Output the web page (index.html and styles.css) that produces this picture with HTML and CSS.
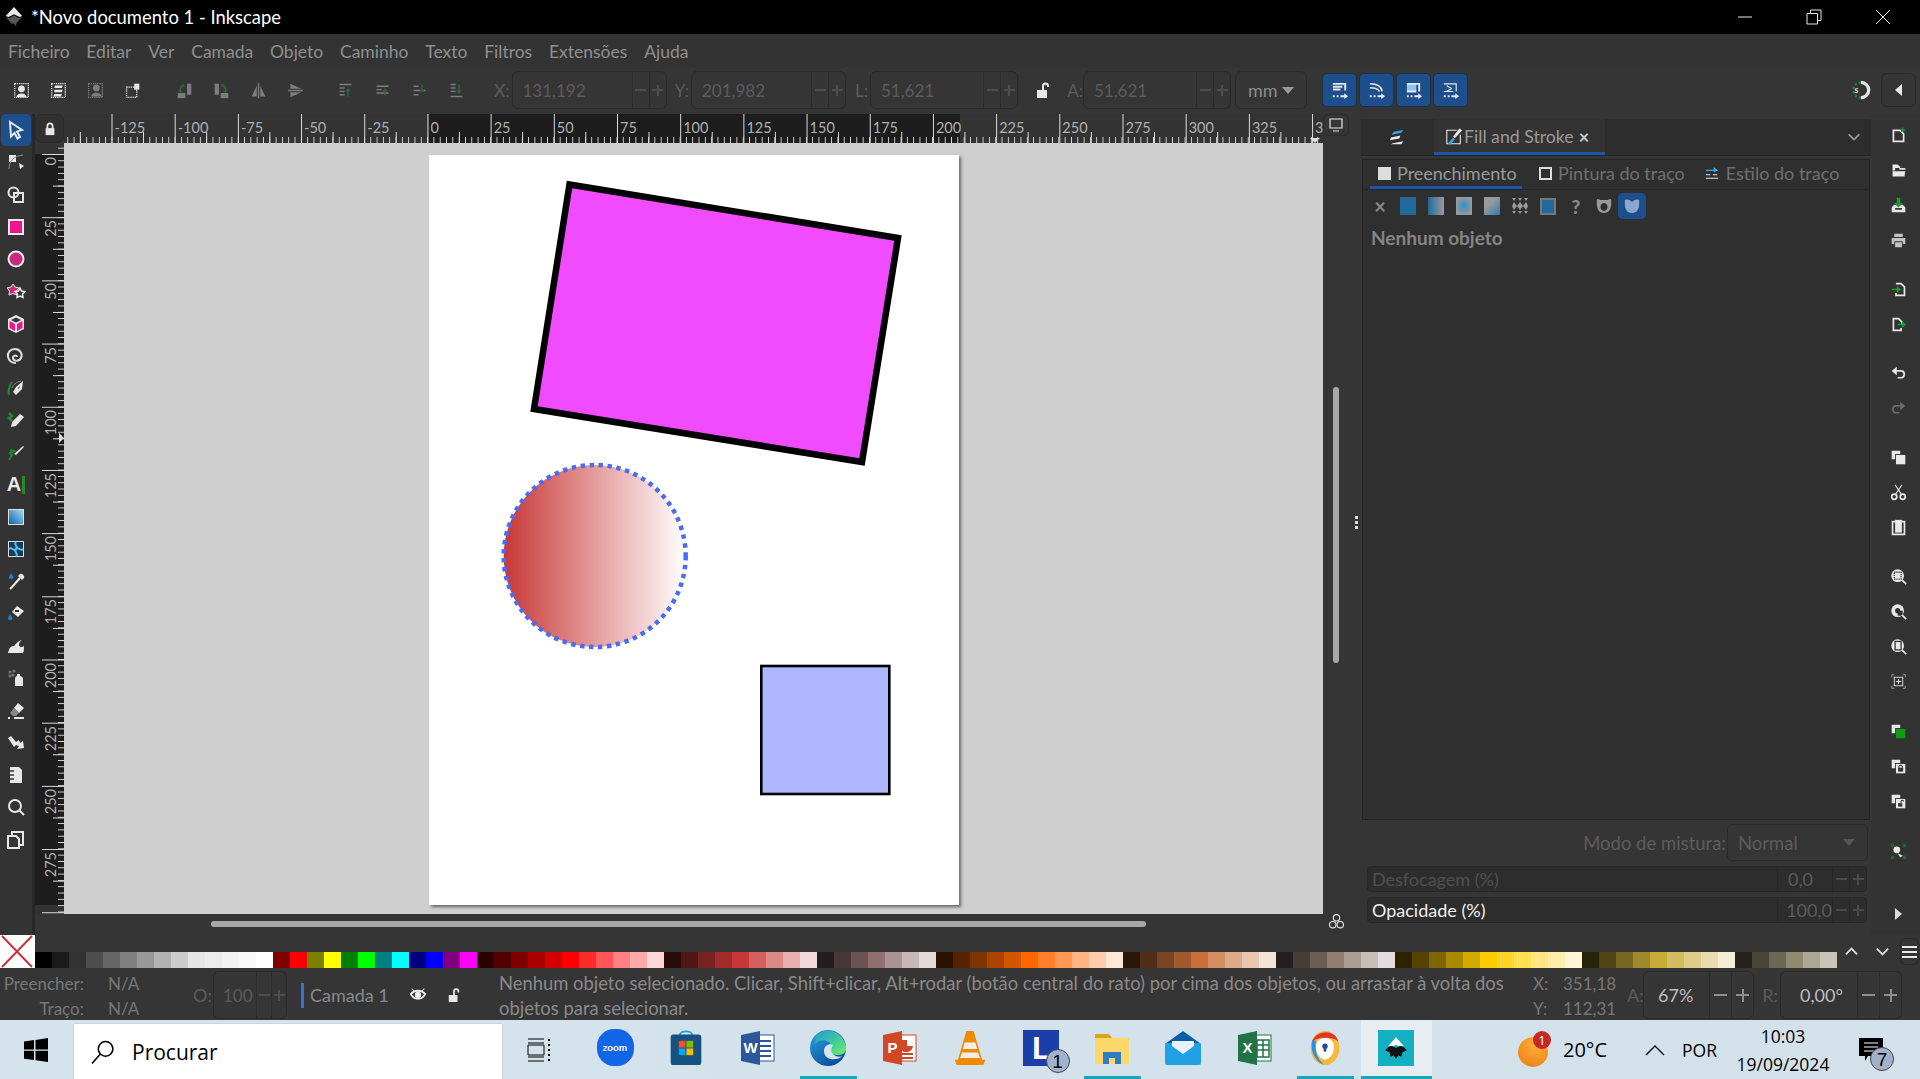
FILE: index.html

```html
<!DOCTYPE html>
<html lang="pt">
<head>
  <meta charset="UTF-8">
  <title>*Novo documento 1 - Inkscape</title>
  <link rel="stylesheet" href="styles.css">
</head>
<body>
  <!-- title bar -->
  <div class="titlebar">
    <svg class="app-logo" viewBox="0 0 24 24"><path class="w" d="M12 1l9 10-3 1-6-3-6 3-3-1z"/><path fill="#555" d="M3 12l4 1 5-3 5 3 4-1-6 6-1 4-2-3-3 0z"/></svg>
    <span class="title-text">*Novo documento 1 - Inkscape</span>
    <div class="win-btns">
      <svg viewBox="0 0 16 16"><path d="M1 8h14" class="ln"/></svg>
      <svg viewBox="0 0 16 16"><path d="M1 4.500h10.500v10.500h-10.500zM4.500 4.500v-3.500h10.500v10.500h-3.500" class="ln"/></svg>
      <svg viewBox="0 0 16 16"><path d="M1 1l14 14M15 1l-14 14" class="ln"/></svg>
    </div>
  </div>

  <!-- menu -->
  <div class="menubar">
    <span>Ficheiro</span><span>Editar</span><span>Ver</span><span>Camada</span><span>Objeto</span><span>Caminho</span><span>Texto</span><span>Filtros</span><span>Extensões</span><span>Ajuda</span>
  </div>

  <!-- commands bar -->
  <div class="toolbar">
    <div class="tb-group first">
      <div class="tb-ic"><svg viewBox="0 0 20 20"><rect class="dots" x="2" y="2" width="16" height="16"/><circle class="w" cx="10" cy="8" r="4"/><path class="w" d="M4 18c0-6 12-6 12 0z"/></svg></div>
      <div class="tb-ic"><svg viewBox="0 0 20 20"><rect class="dots" x="2" y="2" width="16" height="16"/><path class="w" d="M6 4h9l-1 3h-9zM5 9h10l-1 3h-9zM5 14h9l-1 3h-9z"/></svg></div>
      <div class="tb-ic dim"><svg viewBox="0 0 20 20"><rect class="dots" x="2" y="2" width="16" height="16"/><circle class="w" cx="11" cy="7" r="4"/><path class="w" d="M5 17c0-6 12-6 12 0z"/></svg></div>
      <div class="tb-ic"><svg viewBox="0 0 20 20"><rect class="dots" x="3" y="6" width="12" height="12"/><rect class="w" x="12" y="2" width="6" height="7"/></svg></div>
    </div>
    <div class="tb-group mid dim">
      <div class="tb-ic"><svg viewBox="0 0 20 20"><rect class="w" x="2" y="13" width="9" height="6"/><rect class="w" x="13" y="2" width="5" height="13"/><path class="grn" d="M10 2c-4 1-6 3-6 8H2l3 3 3-3H6c0-3 1-4 4-5z"/></svg></div>
      <div class="tb-ic"><svg viewBox="0 0 20 20"><rect class="w" x="9" y="13" width="9" height="6"/><rect class="w" x="2" y="2" width="5" height="13"/><path class="grn" d="M10 2c4 1 6 3 6 8h2l-3 3-3-3h2c0-3-1-4-4-5z"/></svg></div>
      <div class="tb-ic"><svg viewBox="0 0 20 20"><path class="w" d="M8 4v13H2zM12 4v13h6z"/><path class="ln2" d="M10 1v18"/></svg></div>
      <div class="tb-ic"><svg viewBox="0 0 20 20"><path class="w" d="M4 2l13 6H4zM4 12h13L4 18z"/><path class="ln2" d="M1 10h18"/></svg></div>
    </div>
    <div class="tb-group mid2 dim">
      <div class="tb-ic"><svg viewBox="0 0 20 20"><path class="ln2" d="M3 3h14M3 7h6M3 11h6M3 15h6"/><path class="grn" d="M13 7l3 4h-2v6h-2v-6h-2z"/></svg></div>
      <div class="tb-ic"><svg viewBox="0 0 20 20"><path class="ln2" d="M3 5h14M3 9h6M3 13h14"/><path class="grn" d="M13 7l3 4h-2v5h-2v-5h-2z"/></svg></div>
      <div class="tb-ic"><svg viewBox="0 0 20 20"><path class="ln2" d="M3 5h6M3 10h14M3 15h6"/><path class="grn" d="M13 13l3-4h-2v-6h-2v6h-2z"/></svg></div>
      <div class="tb-ic"><svg viewBox="0 0 20 20"><path class="ln2" d="M3 3h6M3 7h6M3 11h6M3 17h14"/><path class="grn" d="M13 14l3-4h-2v-7h-2v7h-2z"/></svg></div>
    </div>
    <span class="lbl lbl-x">X:</span>
    <div class="field f-wide"><span class="val">131,192</span><i class="mn"></i><i class="pl"></i></div>
    <span class="lbl lbl-y">Y:</span>
    <div class="field f-wide"><span class="val">201,982</span><i class="mn"></i><i class="pl"></i></div>
    <span class="lbl lbl-l">L:</span>
    <div class="field f-narrow"><span class="val">51,621</span><i class="mn"></i><i class="pl"></i></div>
    <div class="lock-box"><svg viewBox="0 0 16 16"><path class="w" d="M2 8h10v8H2z"/><path class="ln3" d="M8 8V4c0-3.500 5-3.500 5 0v1"/></svg></div>
    <span class="lbl lbl-a">A:</span>
    <div class="field f-narrow"><span class="val">51,621</span><i class="mn"></i><i class="pl"></i></div>
    <div class="unit-sel"><span>mm</span><b class="caret"></b></div>
    <div class="snap-btns">
      <div class="snap-btn"><svg viewBox="0 0 20 20"><path class="ln3" d="M3 3h13v7M3 6h10M3 9h8"/><path class="w" d="M3 15h2v2H3zM7 15h2v2H7zM11 15h4v-2l4 3-4 3v-2h-4z"/></svg></div>
      <div class="snap-btn"><svg viewBox="0 0 20 20"><path class="ln2" d="M3 3c8 0 12 2 13 8M3 7c6 0 9 1 10 4"/><path class="w" d="M3 15h2v2H3zM7 15h2v2H7zM11 15h4v-2l4 3-4 3v-2h-4z"/></svg></div>
      <div class="snap-btn"><svg viewBox="0 0 20 20"><rect x="3" y="3" width="10" height="8" fill="#8cc8ee"/><path class="ln3" d="M3 3h13v8M3 11h10"/><path class="w" d="M3 15h2v2H3zM7 15h2v2H7zM11 15h4v-2l4 3-4 3v-2h-4z"/></svg></div>
      <div class="snap-btn"><svg viewBox="0 0 20 20"><path class="ln1" d="M3 3h13v8M3 11h10M6 5l5 3-5 3"/><path class="w" d="M3 15h2v2H3zM7 15h2v2H7zM11 15h4v-2l4 3-4 3v-2h-4z"/></svg></div>
    </div>
    <div class="tb-right">
      <svg class="snap-ic" viewBox="0 0 20 20"><path fill="none" stroke="#e6e6e6" stroke-width="3" d="M10 3a7 7 0 0 1 0 14"/><path fill="none" stroke="#1f8a2e" stroke-width="2" stroke-dasharray="2 2" d="M10 3a7 7 0 0 0 0 14"/><text x="4" y="13" class="snap-s">s</text></svg>
      <div class="side-btn"><b class="arr-l"></b></div>
    </div>
  </div>

  <!-- workspace -->
  <div class="workspace">
    <div class="tools">
      <div class="tool active"><svg viewBox="0 0 20 20"><path class="ol" d="M4 2l12 8-5 1.500 3 5.500-2.500 1.500-3-5.500-3.500 3.500z"/></svg></div>
      <div class="tool"><svg viewBox="0 0 20 20"><rect class="w" x="3" y="3" width="7" height="7"/><path fill="none" stroke="#888" d="M3 17c0-8 5-13 14-14"/><path class="w" d="M13 11l5 3-4 3z"/></svg></div>
      <div class="tool"><svg viewBox="0 0 20 20"><circle class="ol" cx="7.500" cy="7.500" r="5"/><rect class="ol" x="8" y="8" width="9" height="9"/></svg></div>
      <div class="tool"><svg viewBox="0 0 20 20"><rect x="3" y="3" width="14" height="14" fill="#f0148c" stroke="#eee" stroke-width="2"/></svg></div>
      <div class="tool"><svg viewBox="0 0 20 20"><circle cx="10" cy="10" r="7.500" fill="#c8287f" stroke="#eee" stroke-width="2"/></svg></div>
      <div class="tool"><svg viewBox="0 0 20 20"><path fill="#c8287f" stroke="#eee" d="M7 3l2 3 4 1-2.500 3 .5 4-4-1.500-4 1.500.5-4L1 7l4-1z"/><path fill="#333" stroke="#eee" stroke-width="1.500" d="M14 7l1.500 3 3.500.5-2.500 2.500.5 3.500-3-1.500-3 1.500.5-3.500L9 10.500l3.500-.5z"/></svg></div>
      <div class="tool"><svg viewBox="0 0 20 20"><path class="w" d="M10 1l8 4v10l-8 4-8-4V5z"/><path fill="#f0148c" d="M3.500 7l5.500 3v7l-5.500-3zM16.500 7L11 10v7l5.500-3z"/><path fill="#333" d="M10 3.500L15 6l-5 2.500L5 6z"/></svg></div>
      <div class="tool"><svg viewBox="0 0 20 20"><path fill="none" stroke="#ddd" stroke-width="2" d="M11 11c0-2-4-2-4 1s6 4 8 0-1-9-6-9-8 4-7 8 4 6 8 6"/></svg></div>
      <div class="tool"><svg viewBox="0 0 20 20"><path class="w" d="M10 9l7-6-1 8-6 6-3-3z"/><path fill="#333" d="M12 10l2-2-1 3z"/><path fill="none" stroke="#1f8a2e" stroke-width="2" d="M3 17c-1-5 0-9 3-13"/><path fill="none" stroke="#888" d="M6 10c1-3 4-6 9-7"/></svg></div>
      <div class="tool"><svg viewBox="0 0 20 20"><path class="w" d="M14 4l4 3-8 9-5 1 1-5z"/><path fill="none" stroke="#1f8a2e" stroke-width="2.500" d="M3 3l3 3-3 2 3 3"/></svg></div>
      <div class="tool"><svg viewBox="0 0 20 20"><path class="w" d="M17 3l1 1-8 8-2-1z"/><path fill="none" stroke="#1f8a2e" stroke-width="2" d="M4 7l4 1-4 2 2 2-3 5"/></svg></div>
      <div class="tool tool-text"><b>A</b><i></i></div>
      <div class="tool"><svg viewBox="0 0 20 20"><defs><linearGradient id="gt" x1="0" y1="1" x2="1" y2="0"><stop offset="0" stop-color="#0a5fa8"/><stop offset="1" stop-color="#a8def8"/></linearGradient></defs><rect x="2.500" y="2.500" width="15" height="15" fill="url(#gt)" stroke="#ddd"/></svg></div>
      <div class="tool"><svg viewBox="0 0 20 20"><rect x="2.500" y="2.500" width="15" height="15" fill="#173a55" stroke="#ddd"/><path fill="none" stroke="#4cc2f5" stroke-width="2" d="M10 3c-3 3 3 4 0 7s-4-3-7 0M10 10c3-3 4 3 7 0M10 10c-3 3 3 4 0 7"/></svg></div>
      <div class="tool"><svg viewBox="0 0 20 20"><path fill="none" stroke="#eee" stroke-width="2" d="M14 6L6 15l-2 2"/><path class="w" d="M12 4l4 4 2-2c1-2-2-5-4-4z"/><path fill="#1a7fd0" d="M5 1c2 3 3 4 2 5.500S3 7 3 5.500 4 3 5 1z"/></svg></div>
      <div class="tool"><svg viewBox="0 0 20 20"><path class="w" d="M11 2l7 5-6 6-6-5z"/><rect fill="#333" x="9" y="6" width="4" height="2"/><path fill="#1a7fd0" d="M4 10c2 3 3 4 2 5.500s-4 .5-4-1S3 12 4 10z"/></svg></div>
      <div class="tool"><svg viewBox="0 0 20 20"><path class="w" d="M2 17c1-4 2-7 6-7 3-4 6-6 8-6-2 1-3 3-3 5 0 2 3 3 5 1 0 3 0 5-1 7z"/></svg></div>
      <div class="tool"><svg viewBox="0 0 20 20"><path class="w" d="M9 11c0-2 1-3 2-3V6h3v2c1 0 3 1 3 3v7H9z"/><circle cx="4" cy="4" r="1.500" fill="#777"/><circle cx="8" cy="3" r="1.500" fill="#777"/><circle cx="4" cy="8" r="1.500" fill="#777"/><circle cx="7" cy="7" r="1.500" fill="#777"/></svg></div>
      <div class="tool"><svg viewBox="0 0 20 20"><path class="w" d="M12 2l6 5-5 5-5-5z"/><path fill="#888" d="M8 7l5 5-3 3H7l-3-3z"/><path class="w" d="M2 16h2v2H2zM8 16h10v2H8z"/></svg></div>
      <div class="tool"><svg viewBox="0 0 20 20"><path class="w" d="M2 5l3-2 5 6 3-2 1 3 3-2 1 7-7 1 2-3-3-1-2 2z"/></svg></div>
      <div class="tool"><svg viewBox="0 0 20 20"><path class="w" d="M4 2h9l3 3v13H4z"/><path stroke="#333" stroke-width="1.500" d="M4 6h4M4 10h4M4 14h4"/></svg></div>
      <div class="tool"><svg viewBox="0 0 20 20"><circle class="ol" cx="9" cy="9" r="6"/><path class="ln3" d="M13 13l5 5"/></svg></div>
      <div class="tool"><svg viewBox="0 0 20 20"><path class="ol" d="M6 6V2h11v13h-4"/><path class="ol" d="M2 6h8l3 3v9H2z"/></svg></div>
    </div>

    <div class="center">
      <div class="ruler-row">
        <div class="guide-lock"><svg viewBox="0 0 16 16"><path class="w" d="M3 7h10v8H3z"/><path class="ln3" d="M5 7V4.500c0-4 6-4 6 0V7"/></svg></div>
        <div class="ruler-h">
          <span>-125</span><span>-100</span><span>-75</span><span>-50</span><span>-25</span><span>0</span><span>25</span><span>50</span><span>75</span><span>100</span><span>125</span><span>150</span><span>175</span><span>200</span><span>225</span><span>250</span><span>275</span><span>300</span><span>325</span><span class="ruler-end">3</span>
        </div>
      </div>
      <div class="canvas-row">
        <div class="ruler-v">
          <span><b>0</b></span><span><b>25</b></span><span><b>50</b></span><span><b>75</b></span><span><b>100</b></span><span><b>125</b></span><span><b>150</b></span><span><b>175</b></span><span><b>200</b></span><span><b>225</b></span><span><b>250</b></span><span><b>275</b></span>
        </div>
        <div class="canvas">
          <div class="page">
            <svg class="drawing" viewBox="0 0 530 751">
              <defs>
                <linearGradient id="ballFill"><stop offset="0" stop-color="#c83737"/><stop offset="1" stop-color="#c83737" stop-opacity="0"/></linearGradient>
              </defs>
              <polygon points="140.500,29.500 469,83 433,307 105,254" fill="#f04bff" stroke="#000" stroke-width="6.500"/>
              <circle cx="165.700" cy="401" r="91" fill="url(#ballFill)" stroke="#4a6cf0" stroke-width="4.500" stroke-dasharray="4.400 4.600"/>
              <rect x="332.300" y="511" width="128" height="128" fill="#afb8ff" stroke="#000" stroke-width="2.600"/>
            </svg>
          </div>
        </div>
      </div>
      <div class="scroll-h"><div class="thumb-h"></div></div>
    </div>

    <div class="scroll-v">
      <div class="monitor-btn"><svg viewBox="0 0 16 16"><path class="ln1" d="M2 2h12v9H2zM5 14h6"/></svg></div>
      <div class="thumb-v"></div>
      <svg class="cms-ic" viewBox="0 0 16 16"><circle cx="8" cy="4.500" r="3" fill="none" stroke="#eee"/><circle cx="4.500" cy="11" r="3" fill="none" stroke="#eee"/><circle cx="11.500" cy="11" r="3" fill="none" stroke="#eee"/></svg>
    </div>
    <div class="grip"><i></i><i></i><i></i></div>

    <!-- dock -->
    <div class="dock">
      <div class="dock-tabs">
        <div class="dock-tab tab-icon"><svg viewBox="0 0 20 20"><path fill="#34a9e8" d="M6 4l10-2-2 3-10 2z"/><path class="w" d="M3 10l10-2-1 3-10 2z"/><path class="w" d="M5 16l11-2-2 3H3z"/></svg></div>
        <div class="dock-tab tab-active">
          <svg viewBox="0 0 20 20"><path class="ln1" d="M13 3H2v15h15V8"/><path class="w" d="M16 1l3 2-8 9-2-2z"/><path fill="#34a9e8" d="M9 11l2 2-5 6-3-1z"/></svg>
          <span>Fill and Stroke</span><b class="tab-x">×</b>
        </div>
        <div class="dock-chevron"><svg viewBox="0 0 16 16"><path fill="none" stroke="#9a9a9a" stroke-width="2" d="M2 5l6 6 6-6"/></svg></div>
      </div>
      <div class="fs-panel">
        <div class="sub-tabs">
          <div class="sub-tab on"><i class="chk solid"></i><span>Preenchimento</span></div>
          <div class="sub-tab t2"><i class="chk"></i><span>Pintura do traço</span></div>
          <div class="sub-tab t3"><svg viewBox="0 0 16 16"><path fill="none" stroke="#34a9e8" stroke-width="1.500" d="M1 5h12"/><path fill="#34a9e8" d="M10 1l5 4-5 2z"/><path class="ln1" d="M1 10h5M9 10h5M1 14h14"/></svg><span>Estilo do traço</span></div>
        </div>
        <div class="paint-row">
          <div class="paint"><span class="none-x">×</span></div>
          <div class="paint"><i class="sw flat"></i></div>
          <div class="paint"><i class="sw lin"></i></div>
          <div class="paint"><i class="sw rad"></i></div>
          <div class="paint"><i class="sw mesh"></i></div>
          <div class="paint"><svg viewBox="0 0 16 16"><path fill="#9a9a9a" d="M0 0h4l-2 3zM6 0h4L8 3zM12 0h4l-2 3zM2 4l3 4-3 4-2-4zM8 4l3 4-3 4-3-4zM14 4l2 4-2 4-3-4zM0 13h4l-2 3zM6 13h4l-2 3zM12 13h4l-2 3z"/></svg></div>
          <div class="paint"><i class="sw swatch"></i></div>
          <div class="paint"><span class="unk">?</span></div>
          <div class="paint"><svg viewBox="0 0 16 16"><path fill-rule="evenodd" fill="#9a9a9a" d="M1 1c2 0 3 1 3 1h8s1-1 3-1c1 8-1 14-7 14S0 9 1 1zM8 5a3.500 4 0 1 0 .01 0z"/></svg></div>
          <div class="paint active"><svg viewBox="0 0 16 16"><path fill="#8ea6cf" d="M1 2c3-1 5 0 7 2 2-2 4-3 7-2 1 7-1 13-7 13S0 9 1 2z"/></svg></div>
        </div>
        <div class="no-object">Nenhum objeto</div>
      </div>
      <div class="blend-row">
        <span>Modo de mistura:</span>
        <div class="blend-sel"><span>Normal</span><b class="caret dark"></b></div>
      </div>
      <div class="slider off"><span class="s-name">Desfocagem (%)</span><span class="s-val">0,0</span><i class="mn"></i><i class="pl"></i></div>
      <div class="slider"><span class="s-name">Opacidade (%)</span><span class="s-val dimv">100,0</span><i class="mn"></i><i class="pl"></i></div>
    </div>

    <div class="commands">
      <div class="cmd"><svg viewBox="0 0 20 20"><path class="ol" d="M4 4h8l4 4v9H4z"/><path fill="#1f8a2e" d="M15 0l1 2h2l-1 2 1 2-3-1-2 1 0-3z"/></svg></div>
      <div class="cmd"><svg viewBox="0 0 20 20"><path class="w" d="M3 3h6l2 2h1v2H6v3H3zM3 11h15l-1 6H3z"/><path class="w" d="M11 7h7v2h-7z"/></svg></div>
      <div class="cmd"><svg viewBox="0 0 20 20"><path class="w" d="M2 12l3-3h2l3 3 3-3h2l3 3v6H2z"/><rect fill="#333" x="6" y="13" width="8" height="2"/><path fill="#16a02a" d="M8 1h4v6h3l-5 5-5-5h3z"/></svg></div>
      <div class="cmd dim2"><svg viewBox="0 0 20 20"><path class="w" d="M5 2h10v4H5zM2 7h16v7h-3v-3H5v3H2zM6 12h8v6H6z"/></svg></div>
      <div class="cmd gap"><svg viewBox="0 0 20 20"><path class="ol" d="M7 3h6l4 4v10H7v-3"/><path fill="#16a02a" d="M2 9h6V6l5 4-5 4v-3H2z"/></svg></div>
      <div class="cmd"><svg viewBox="0 0 20 20"><path class="ol" d="M13 14v3H4V3h6l4 4v2"/><path fill="#16a02a" d="M9 9h5V6l5 4-5 4v-3H9z"/></svg></div>
      <div class="cmd gap"><svg viewBox="0 0 20 20"><path class="ln3" d="M4 7h9c5 0 5 8 0 8H9"/><path class="w" d="M8 2v10L2 7z"/></svg></div>
      <div class="cmd dim3"><svg viewBox="0 0 20 20"><path class="ln3" d="M16 7H7c-5 0-5 8 0 8h4"/><path class="w" d="M12 2v10l6-5z"/></svg></div>
      <div class="cmd gap"><svg viewBox="0 0 20 20"><path class="w" d="M2 2h10v4H6v6H2z"/><rect class="w" x="7" y="7" width="11" height="11"/></svg></div>
      <div class="cmd"><svg viewBox="0 0 20 20"><circle class="ol" cx="5" cy="15" r="3"/><circle class="ol" cx="15" cy="15" r="3"/><path class="ln1" d="M6 13L14 1M14 13L6 1"/></svg></div>
      <div class="cmd"><svg viewBox="0 0 20 20"><path class="ol" d="M3 3h14v15H3z"/><path class="w" d="M6 1h8v15H6z"/></svg></div>
      <div class="cmd gap"><svg viewBox="0 0 20 20"><circle class="w" cx="9" cy="9" r="7.500"/><rect class="dots dk" x="5" y="5" width="8" height="8"/><path class="ln3" d="M14 14l5 5"/></svg></div>
      <div class="cmd"><svg viewBox="0 0 20 20"><circle class="w" cx="9" cy="9" r="7.500"/><circle cx="9" cy="9" r="3" fill="#333"/><rect x="9" y="9" width="6" height="6" fill="#333"/><path class="ln3" d="M14 14l5 5"/></svg></div>
      <div class="cmd"><svg viewBox="0 0 20 20"><circle class="w" cx="9" cy="9" r="7.500"/><rect x="6" y="4" width="7" height="10" fill="none" stroke="#333" stroke-width="1.500"/><path class="ln3" d="M14 14l5 5"/></svg></div>
      <div class="cmd"><svg viewBox="0 0 20 20"><path fill="none" stroke="#aaa" d="M2 5V2h3M15 2h3v3M18 15v3h-3M5 18H2v-3"/><rect x="5" y="5" width="10" height="10" fill="none" stroke="#eee"/><path class="ln1" d="M7 10h6M10 7v6"/></svg></div>
      <div class="cmd gap2"><svg viewBox="0 0 20 20"><path class="w" d="M2 2h10v4H6v6H2z"/><rect fill="#0f9a10" x="7" y="7" width="11" height="11"/></svg></div>
      <div class="cmd"><svg viewBox="0 0 20 20"><path class="w" d="M2 2h10v4H6v6H2z"/><rect class="w" x="7" y="7" width="11" height="11"/><path fill="#333" d="M9.500 11.500h6V16h-6z"/><path fill="none" stroke="#333" stroke-width="1.200" d="M10.500 12V10c0-2 4-2 4 0v2"/></svg></div>
      <div class="cmd"><svg viewBox="0 0 20 20"><path class="w" d="M2 2h10v4H6v6H2z"/><rect class="w" x="7" y="7" width="11" height="11"/><path fill="#333" d="M9.500 12h5V16h-5z"/><path fill="none" stroke="#333" stroke-width="1.200" d="M13 12V10c0-2 3-2 3 0"/></svg></div>
      <div class="cmd gap2"><svg viewBox="0 0 20 20"><path fill="#1c6b2a" d="M1 1h4v4H1zM15 1h4v4h-4zM1 15h4v4H1zM15 15h4v4h-4z"/><circle class="w" cx="8" cy="8" r="4"/><path class="w" d="M9 12l6 3-3 2z"/></svg></div>
      <div class="cmd last"><b class="arr-r"></b></div>
    </div>
  </div>

  <!-- palette -->
  <div class="palette">
    <div class="no-paint"><svg viewBox="0 0 34 33" preserveAspectRatio="none"><path fill="none" stroke="#c8323c" stroke-width="2" d="M2 1l30 31M32 1L2 32"/></svg></div>
    <div id="swatches" class="swatches"></div>
    <div class="pal-ctrl">
      <svg viewBox="0 0 16 16"><path fill="none" stroke="#ddd" stroke-width="2" d="M2 11l6-6 6 6"/></svg>
      <svg viewBox="0 0 16 16"><path fill="none" stroke="#ddd" stroke-width="2" d="M2 5l6 6 6-6"/></svg>
      <div class="pal-menu"><i></i><i></i><i></i></div>
    </div>
  </div>

  <!-- status bar -->
  <div class="statusbar">
    <div class="fill-info">
      <span class="fi-l">Preencher:</span><span class="fi-v">N/A</span>
      <span class="fi-l">Traço:</span><span class="fi-v">N/A</span>
    </div>
    <span class="lbl lbl-o">O:</span>
    <div class="field f-op"><span class="val">100</span><i class="mn"></i><i class="pl"></i></div>
    <i class="layer-bar"></i>
    <span class="layer-name">Camada 1</span>
    <svg class="st-ic" viewBox="0 0 20 20"><path fill="none" stroke="#eee" stroke-width="2" d="M2 9c4-5 12-5 16 0-4 7-12 7-16 0z"/><circle cx="10" cy="10" r="3.500" fill="#eee"/><path class="ln1" d="M3 3l3 3M17 3l-3 3"/></svg>
    <svg class="st-ic lk" viewBox="0 0 16 16"><path class="w" d="M2 8h10v8H2z"/><path class="ln3" d="M8 8V4c0-3.500 5-3.500 5 0v1"/></svg>
    <div class="st-msg">Nenhum objeto selecionado. Clicar, Shift+clicar, Alt+rodar (botão central do rato) por cima dos objetos, ou arrastar à volta dos<br>objetos para selecionar.</div>
    <div class="coords">
      <span>X:</span><span>351,18</span>
      <span>Y:</span><span>112,31</span>
    </div>
    <span class="lbl lbl-z">A:</span>
    <div class="field f-zoom live"><span class="val">67%</span><i class="mn"></i><i class="pl"></i></div>
    <span class="lbl lbl-r">R:</span>
    <div class="field f-rot live"><span class="val">0,00°</span><i class="mn"></i><i class="pl"></i></div>
  </div>

  <!-- windows taskbar -->
  <div class="taskbar">
    <svg class="start" viewBox="0 0 24 24"><path fill="#000" d="M0 3.500l10-1.400v9.400H0zM11.500 1.900L24 0v11.500H11.500zM0 12.800h10v9.300L0 20.700zM11.500 12.800H24V24l-12.500-1.800z"/></svg>
    <div class="search">
      <svg viewBox="0 0 24 24"><circle cx="14" cy="9" r="7" fill="none" stroke="#000" stroke-width="1.500"/><path stroke="#000" stroke-width="1.500" d="M9 14l-8 9"/></svg>
      <span>Procurar</span>
    </div>
    <div class="task-view"><svg viewBox="0 0 24 24"><path fill="none" stroke="#000" d="M1 1h16M1 5h16M1 7h16v10H1zM1 19h16M1 23h16"/><path stroke="#000" stroke-width="2" stroke-dasharray="2 3" d="M22 1v23"/></svg></div>
    <div class="apps">
      <div class="app"><div class="zoom-ic">zoom</div></div>
      <div class="app"><svg viewBox="0 0 36 40"><path fill="none" stroke="#1aa3d8" stroke-width="2" d="M11 6c0-6 14-6 14 0"/><rect x="1" y="5" width="34" height="34" rx="3" fill="#17517f"/><rect x="10" y="12" width="7.500" height="7.500" fill="#f25022"/><rect x="18.500" y="12" width="7.500" height="7.500" fill="#7fba00"/><rect x="10" y="20.500" width="7.500" height="7.500" fill="#00a4ef"/><rect x="18.500" y="20.500" width="7.500" height="7.500" fill="#ffb900"/></svg></div>
      <div class="app"><svg viewBox="0 0 36 36"><rect x="15" y="5" width="20" height="26" fill="#fff" stroke="#2b579a"/><path stroke="#2b579a" stroke-width="2" d="M20 11h12M20 16h12M20 21h12M20 26h12"/><path fill="#2b579a" d="M2 5l19-4v34L2 31z"/><text x="11.500" y="23" class="tile-l">W</text></svg></div>
      <div class="app on"><svg viewBox="0 0 36 36"><defs><linearGradient id="edgeA" x1="0" y1="0" x2=".6" y2="1"><stop offset="0" stop-color="#2aa5dc"/><stop offset="1" stop-color="#0c4f9e"/></linearGradient><linearGradient id="edgeB" x1="0" y1="0" x2="1" y2="1"><stop offset="0" stop-color="#1f9bd8"/><stop offset=".7" stop-color="#4fd88a"/><stop offset="1" stop-color="#7ce860"/></linearGradient></defs><circle cx="18" cy="18" r="18" fill="url(#edgeA)"/><path fill="url(#edgeB)" d="M6 5c9-8 26-5 30 11 1 6-3 9-8 9-5 0-8-2-8-5 1-4 2-7-3-9-6-2-9 0-12 3z"/><path fill="#d7e4ec" d="M14 21c0-5 5-8 9-6-2 3-3 7 1 10 3 2 6 2 8 1-4 5-18 5-18-5z"/></svg></div>
      <div class="app"><svg viewBox="0 0 36 36"><rect x="15" y="5" width="20" height="26" fill="#fff" stroke="#d24726"/><path fill="#d24726" d="M20 10h6v6h6a7 7 0 0 1-12 4z"/><path stroke="#d24726" stroke-width="2" d="M20 24h12M20 28h12"/><path fill="#d24726" d="M2 5l19-4v34L2 31z"/><text x="11.500" y="23" class="tile-l">P</text></svg></div>
      <div class="app"><svg viewBox="0 0 36 40"><path fill="#f08a00" d="M14 1h8l10 34H4z"/><path fill="#eee" d="M12 14h12l2 7H10zM9 25h18l2 6H7z"/><path fill="#f08a00" d="M1 33h34l-2 6H3z"/></svg></div>
      <div class="app"><div class="l-tile">L</div><div class="count-badge">1</div></div>
      <div class="app on"><svg viewBox="0 0 36 36"><path fill="#d9a520" d="M1 4h14l3 4h0v6H1z"/><rect x="1" y="8" width="34" height="26" fill="#fcd86a"/><path fill="#2f7ec4" d="M9 34V22h18v12h-6v-6h-6v6z"/></svg></div>
      <div class="app"><svg viewBox="0 0 36 36"><path fill="#0a5ea8" d="M18 1l18 13H0z"/><rect y="13" width="36" height="22" rx="2" fill="#21a0e6"/><path fill="#eaf2f8" d="M7 11h22v5l-11 8-11-8z"/></svg></div>
      <div class="app"><svg viewBox="0 0 36 36"><rect x="15" y="5" width="20" height="26" fill="#fff" stroke="#217346"/><path fill="none" stroke="#217346" stroke-width="1.500" d="M21 10h12v17H21zM21 15h12M21 20h12M27 10v17"/><path fill="#217346" d="M2 5l19-4v34L2 31z"/><text x="11.500" y="23" class="tile-l">X</text></svg></div>
      <div class="app on"><svg viewBox="0 0 36 40"><ellipse cx="18" cy="20" rx="16" ry="19" fill="#f6b93b"/><path fill="#2a8fe6" d="M4 11C1 22 6 34 17 39 9 32 6 22 8 12z"/><path fill="#e0352b" d="M4 13C7 0 29-2 33 13c-5-6-24-6-29 0z"/><path fill="#fff" d="M18 9c5 0 10 3 10 10s-5 14-10 14-10-7-10-14S13 9 18 9z"/><circle cx="18" cy="18" r="3" fill="#2d4a8a"/><rect x="16.500" y="18" width="3" height="6" fill="#2d4a8a"/></svg></div>
      <div class="app active-app on"><div class="ink-tile"><svg viewBox="0 0 24 24"><path fill="#fff" d="M12 2l7 8-3 1-4-2-4 2-3-1z"/><path fill="#111" d="M5 11l3-1 4 2 4-2 3 1 3 3-4 2-1 4-3-1-2 3-2-3-3 1-1-4-4-2z"/></svg></div></div>
    </div>
    <div class="tray">
      <div class="weather"><i class="sun"></i><b class="sun-badge">1</b></div>
      <span class="temp">20°C</span>
      <svg class="tray-up" viewBox="0 0 20 12"><path fill="none" stroke="#000" stroke-width="1.300" d="M1 11l9-9 9 9"/></svg>
      <span class="lang">POR</span>
      <div class="clock"><span>10:03</span><span>19/09/2024</span></div>
      <div class="notif"><svg viewBox="0 0 24 24"><path d="M0 0h24v18H9l-3 5v-5H0z"/><path stroke="#fff" d="M5 5h14M5 9h14M5 13h14"/></svg><div class="count-badge big">7</div></div>
      <i class="show-desk"></i>
    </div>
  </div>

  <script src="app.js"></script>
</body>
</html>
```

FILE: styles.css

```css
:root {
  --bar: #353535;
  --dock: #2f2f2f;
  --line: #242424;
  --muted: #8c8c8c;
  --off: #5c5c5c;
  --blue: #1c4f8c;
}

* {
  box-sizing: border-box;
  margin: 0;
  padding: 0;
}

html, body {
  width: 1920px;
  height: 1079px;
  overflow: hidden;
}

body {
  display: flex;
  flex-direction: column;
  font-family: Lato, "Noto Sans", sans-serif;
  font-size: 18px;
  color: var(--muted);
  background: var(--bar);
}

i, b { font-style: normal; display: block; }
svg { display: block; }

/* svg paint helpers */
.w { fill: #e8e8e8; }
.grn { fill: #2ea83e; }
.ln { fill: none; stroke: #e8e8e8; stroke-width: 1; }
.ln1 { fill: none; stroke: #e8e8e8; stroke-width: 1.2; }
.ln2 { fill: none; stroke: #e8e8e8; stroke-width: 1.6; }
.ln3 { fill: none; stroke: #e8e8e8; stroke-width: 2; }
.ol { fill: none; stroke: #e8e8e8; stroke-width: 2; }
.dots { fill: none; stroke: #e8e8e8; stroke-width: 1.5; stroke-dasharray: 1.5 1; }
.dots.dk { stroke: #333; }
.dim { opacity: .4; }
.tile-l { fill: #fff; font-family: "Liberation Sans", sans-serif; font-size: 15px; font-weight: 700; text-anchor: middle; }

/* title bar */
.titlebar {
  height: 34px;
  flex: none;
  background: #000;
  color: #fff;
  display: flex;
  align-items: center;
  padding-left: 3px;
}
.app-logo { width: 22px; height: 26px; }
.title-text { margin-left: 6px; font-size: 18.400px; }
.win-btns {
  margin-left: auto;
  display: flex;
  gap: 53px;
  padding-right: 29px;
}
.win-btns svg { width: 16px; height: 16px; }

/* menu */
.menubar {
  height: 34px;
  flex: none;
  background: #333;
  display: flex;
  align-items: center;
  gap: 16.800px;
  padding-left: 8px;
  font-size: 17.500px;
  color: #8f8f8f;
}

/* top toolbar */
.toolbar {
  height: 46px;
  flex: none;
  background: var(--bar);
  display: flex;
  align-items: center;
  padding: 0 0 2px 3px;
  font-size: 17px;
}
.tb-group { display: flex; }
.tb-group.mid { margin-left: 14.500px; }
.tb-group.mid2 { margin-left: 13px; }
.tb-ic {
  width: 37px;
  display: flex;
  justify-content: center;
}
.tb-ic svg { width: 17px; height: 17px; }

.lbl { color: var(--off); text-align: right; padding-right: 2px; flex: none; }
.lbl-x { width: 37px; }
.lbl-y { width: 24.500px; }
.lbl-l { width: 24px; }
.lbl-a { width: 16px; padding-right: 0; }

.field {
  height: 38px;
  flex: none;
  display: flex;
  align-items: center;
  border: 1px solid #2a2a2a;
  border-radius: 6px;
  color: var(--off);
  padding-left: 10px;
}
.field .val { flex: 1; }
.f-wide { width: 155px; }
.f-narrow { width: 148px; }
.mn, .pl {
  --tick: #4e4e4e;
  width: 17px;
  height: 100%;
  flex: none;
  border-left: 1px solid #2c2c2c;
  background: linear-gradient(var(--tick), var(--tick)) center / 11px 2px no-repeat;
}
.pl {
  background:
    linear-gradient(var(--tick), var(--tick)) center / 11px 2px no-repeat,
    linear-gradient(var(--tick), var(--tick)) center / 2px 11px no-repeat;
}
.live { color: #bdbdbd; font-size: 18px; }
.live .mn, .live .pl {
  --tick: #8f8f8f;
  width: 22px;
  background-size: 13px 2px;
}
.live .pl { background-size: 13px 2px, 2px 13px; }

.lock-box { width: 49px; display: flex; justify-content: center; flex: none; }
.lock-box svg { width: 16px; height: 18px; }

.unit-sel {
  margin-left: 4px;
  width: 72px;
  height: 38px;
  flex: none;
  border: 1px solid #2a2a2a;
  border-radius: 6px;
  display: flex;
  align-items: center;
  gap: 4px;
  padding-left: 12px;
  font-size: 18px;
  color: var(--muted);
}
.caret {
  width: 0;
  height: 0;
  border: 6px solid transparent;
  border-top: 7px solid #9a9a9a;
  border-bottom: 0;
}
.caret.dark { border-top-color: #555; }

.snap-btns { display: flex; gap: 2px; margin-left: 15px; }
.snap-btn {
  width: 35px;
  height: 34px;
  background: var(--blue);
  border: 1px solid #1d3048;
  border-radius: 5px;
  display: flex;
  align-items: center;
  justify-content: center;
}
.snap-btn svg { width: 19px; height: 19px; }
.tb-right {
  margin-left: auto;
  display: flex;
  align-items: center;
  padding-right: 4px;
}
.snap-ic { width: 22px; height: 22px; margin-right: 9px; }
.snap-s { font-size: 8px; font-weight: 700; fill: #ddd; }
.side-btn {
  width: 35px;
  height: 34px;
  border: 1px solid #2a2a2a;
  border-radius: 6px;
  display: flex;
  align-items: center;
  justify-content: center;
}
.arr-l {
  border: 6px solid transparent;
  border-right: 7px solid #e8e8e8;
  border-left: 0;
}
.arr-r {
  border: 6px solid transparent;
  border-left: 7px solid #ddd;
  border-right: 0;
}

/* workspace */
.workspace {
  height: 821px;
  flex: none;
  display: flex;
}
.tools {
  width: 35px;
  flex: none;
  background: #333;
  border-right: 3px solid #282828;
}
.tool {
  height: 32.250px;
  display: flex;
  align-items: center;
  justify-content: center;
}
.tool svg { width: 20px; height: 20px; }
.tool.active {
  background: var(--blue);
  border-radius: 5px;
  margin: 0 1px;
}
.tool-text b { color: #e8e8e8; font-size: 20px; font-family: "Liberation Sans", sans-serif; }
.tool-text i { width: 3px; height: 18px; background: #1f8a2e; margin-left: 1px; }

.center {
  width: 1288px;
  flex: none;
  display: flex;
  flex-direction: column;
}
.ruler-row { height: 29px; flex: none; display: flex; }
.guide-lock {
  width: 29px;
  flex: none;
  background: #303030;
  border: 1px solid #2a2a2a;
  border-radius: 6px;
  display: flex;
  align-items: center;
  justify-content: center;
}
.guide-lock svg { width: 14px; height: 18px; }

/* rulers: minor ticks, half ticks, major ticks, then the dark page range */
.ruler-h {
  flex: 1;
  display: flex;
  overflow: hidden;
  position: relative;
  padding-left: 47.500px;
  color: #b0b0b0;
  font-size: 14.500px;
  line-height: 28px;
  background:
    linear-gradient(to right, #ddd 1px, transparent 1px) 47.500px 100% / 6.320px 6px repeat-x,
    linear-gradient(to right, #ddd 1px, transparent 1px) 79px 100% / 63.200px 11px repeat-x,
    linear-gradient(to right, #ddd 1px, transparent 1px) 47.500px 100% / 63.200px 29px repeat-x,
    linear-gradient(#1d1d1d, #1d1d1d) 365px 0 / 531px 100% no-repeat,
    #333;
}
.ruler-h span {
  width: 63.200px;
  flex: none;
  padding-left: 3px;
}
.ruler-h .ruler-end { width: 12px; }
/* pointer position markers on the rulers */
.ruler-h::after {
  content: "";
  position: absolute;
  left: 1246px;
  bottom: 0;
  border: 5px solid transparent;
  border-top: 5px solid #ddd;
  border-bottom: 0;
}
.canvas-row { height: 771px; flex: none; display: flex; }
.ruler-v {
  width: 29px;
  flex: none;
  padding-top: 11px;
  overflow: hidden;
  position: relative;
  color: #b0b0b0;
  font-size: 14.500px;
  background:
    linear-gradient(to bottom, #ddd 1px, transparent 1px) 100% 11px / 6px 6.320px repeat-y,
    linear-gradient(to bottom, #ddd 1px, transparent 1px) 100% 42.600px / 11px 63.200px repeat-y,
    linear-gradient(to bottom, #ddd 1px, transparent 1px) 100% 11px / 22px 63.200px repeat-y,
    linear-gradient(#1d1d1d, #1d1d1d) 0 11px / 100% 751px no-repeat,
    #333;
}
.ruler-v::after {
  content: "";
  position: absolute;
  right: 0;
  top: 290px;
  border: 5px solid transparent;
  border-left: 5px solid #ddd;
  border-right: 0;
}
.ruler-v span {
  display: block;
  height: 63.200px;
  padding-top: 3px;
  padding-left: 8px;
}
.ruler-v b {
  font-weight: 400;
  writing-mode: vertical-rl;
  transform: rotate(180deg);
  line-height: 15px;
  height: max-content;
}
.canvas {
  width: 1259px;
  flex: none;
  background: #cfcfcf;
  padding: 12px 0 0 365px;
  overflow: hidden;
}
.page {
  width: 530px;
  height: 750px;
  background: #fff;
  box-shadow: 2px 2px 3px #666;
}
.drawing { width: 530px; height: 751px; }

.scroll-h {
  height: 21px;
  flex: none;
  background: var(--bar);
  padding: 7px 0 0 176px;
}
.thumb-h {
  width: 935px;
  height: 6px;
  border-radius: 3px;
  background: #a8a8a8;
}
.scroll-v {
  width: 29px;
  flex: none;
  background: var(--bar);
  display: flex;
  flex-direction: column;
  align-items: center;
  padding-right: 3px;
}
.monitor-btn {
  width: 26px;
  height: 22px;
  margin-top: 0;
  border: 1px solid #2a2a2a;
  border-radius: 5px;
  display: flex;
  align-items: center;
  justify-content: center;
}
.monitor-btn svg { width: 16px; height: 16px; }
.thumb-v {
  width: 6px;
  height: 276px;
  margin-top: 251px;
  border-radius: 3px;
  background: #a8a8a8;
}
.cms-ic { width: 17px; height: 17px; margin-top: 250px; }
.grip {
  width: 9px;
  flex: none;
  background: var(--bar);
  display: flex;
  flex-direction: column;
  align-items: center;
  justify-content: center;
  gap: 2px;
  padding-bottom: 5px;
}
.grip i { width: 3px; height: 3px; background: #ddd; }

/* dock */
.dock {
  width: 510px;
  flex: none;
  padding-top: 5px;
  background: var(--bar);
  display: flex;
  flex-direction: column;
}
.dock-tabs {
  height: 37px;
  flex: none;
  display: flex;
  background: #2d2d2d;
  border-bottom: 1px solid var(--line);
}
.dock-tab {
  display: flex;
  align-items: center;
}
.tab-icon { width: 73px; justify-content: center; }
.tab-icon svg { width: 19px; height: 19px; }
.tab-active {
  width: 171px;
  gap: 1px;
  padding: 2px 0 0 11px;
  font-size: 17.700px;
  color: #9a9a9a;
  background: #333;
  border-bottom: 3px solid #1c56a8;
}
.tab-active svg { width: 18px; height: 19px; }
.tab-x { color: #ccc; font-size: 18px; margin-left: 4px; }
.dock-chevron {
  margin-left: auto;
  width: 32px;
  display: flex;
  align-items: center;
  justify-content: center;
  margin-right: 1px;
}
.dock-chevron svg { width: 14px; height: 14px; }

.fs-panel {
  margin: 3px 1px 0 1px;
  height: 661px;
  flex: none;
  background: var(--dock);
  border: 1px solid var(--line);
}
.sub-tabs {
  height: 30px;
  display: flex;
  align-items: center;
  border-bottom: 1px solid #262626;
}
.sub-tab {
  display: flex;
  align-items: center;
  gap: 6px;
  height: 100%;
  color: #707070;
  padding-bottom: 3px;
}
.sub-tab.on {
  margin-left: 7px;
  width: 152px;
  padding: 0 0 0 8px;
  color: #9a9a9a;
  border-bottom: 3px solid #1c56a8;
}
.sub-tab.t2 { margin-left: 17px; }
.sub-tab.t3 { margin-left: 20px; gap: 7px; }
.sub-tab svg { width: 14px; height: 14px; }
.chk { width: 13px; height: 13px; border: 2px solid #ddd; }
.chk.solid { background: #ddd; }

.paint-row {
  display: flex;
  padding-left: 3px;
  height: 36px;
  align-items: center;
  margin-top: -2px;
}
.paint {
  width: 28px;
  height: 26px;
  flex: none;
  display: flex;
  align-items: center;
  justify-content: center;
}
.paint svg { width: 16px; height: 16px; }
.paint.active { background: var(--blue); border-radius: 5px; }
.none-x { color: #8a8a8a; font-size: 20px; font-weight: 700; }
.unk { color: #8a8a8a; font-size: 19px; font-weight: 900; }
.sw { width: 16px; height: 18px; }
.sw.flat { background: #21699a; }
.sw.lin { background: linear-gradient(to right, #21699a, #9a9a9a); }
.sw.rad { background: radial-gradient(#2c8fd0, #9a9a9a 75%); }
.sw.mesh { background: linear-gradient(135deg, #9a9a9a 35%, #2d7cb0); }
.sw.swatch { background: #21699a; border: 2px solid #777; height: 17px; }

.no-object {
  margin: 2px 0 0 8px;
  font-weight: 700;
  font-size: 19px;
  color: #858585;
}

.blend-row {
  height: 37px;
  margin-top: 4px;
  flex: none;
  display: flex;
  justify-content: flex-end;
  align-items: center;
  font-size: 18.500px;
  color: var(--off);
  padding-right: 3px;
}
.blend-sel {
  width: 141px;
  height: 100%;
  margin-left: 1px;
  border: 1px solid #2a2a2a;
  border-radius: 5px;
  display: flex;
  align-items: center;
  justify-content: space-between;
  padding: 0 12px 0 10px;
}
.slider {
  height: 26px;
  margin: 5px 4px 0 6px;
  flex: none;
  display: flex;
  align-items: center;
  border: 1px solid #272727;
  border-radius: 4px;
  background: #2d2d2d;
  color: #f0f0f0;
}
.slider + .slider { margin-top: 5px; }
.s-name { flex: 1; padding-left: 4px; }
.slider.off .s-name { color: #505050; }
.s-val {
  width: 55px;
  height: 100%;
  border-left: 1px solid #272727;
  color: var(--off);
  text-align: right;
  padding-right: 19px;
  line-height: 25px;
}
.s-val.dimv { padding-right: 0; }
.slider .mn, .slider .pl { --tick: #4a4a4a; border-left-color: #272727; }

.commands {
  width: 49px;
  flex: none;
  background: #333;
  padding: 3.500px 0 0 5px;
  display: flex;
  flex-direction: column;
  align-items: center;
}
.cmd {
  height: 35px;
  flex: none;
  display: flex;
  align-items: center;
  justify-content: center;
}
.cmd svg { width: 17px; height: 17px; }
.cmd.gap { margin-top: 14px; }
.cmd.gap2 { margin-top: 15px; }
.cmd.last { margin-top: 28px; }
.dim2 { opacity: .8; }
.dim3 { opacity: .3; }

/* palette */
.palette {
  height: 33px;
  flex: none;
  display: flex;
  align-items: flex-end;
}
.no-paint { width: 35px; height: 33px; flex: none; background: #fff; }
.no-paint svg { width: 34px; height: 33px; }
.swatches { display: flex; height: 16px; flex: none; }
.swatches i { width: 17px; height: 16px; flex: none; }
.pal-ctrl {
  height: 33px;
  flex: 1;
  display: flex;
  align-items: center;
  gap: 16px;
  padding-left: 7px;
}
.pal-ctrl svg { width: 15px; height: 15px; }
.pal-menu {
  width: 19px;
  height: 27px;
  margin-left: -6px;
  border: 1px solid #2a2a2a;
  border-radius: 6px;
  display: flex;
  flex-direction: column;
  justify-content: center;
  align-items: center;
  gap: 3px;
}
.pal-menu i { width: 15px; height: 2px; background: #e8e8e8; }

/* status bar */
.statusbar {
  height: 52px;
  flex: none;
  display: flex;
  align-items: center;
  background: var(--bar);
  padding-top: 2px;
}
.fill-info {
  width: 193px;
  flex: none;
  margin-top: 2px;
  display: grid;
  grid-template-columns: 84px 1fr;
  column-gap: 24px;
  row-gap: 3px;
  font-size: 17px;
  line-height: 22px;
  color: #777;
}
.fi-l { text-align: right; }
.lbl-o { width: 20px; }
.f-op {
  width: 74px;
  height: 48px;
  padding-left: 9px;
  font-size: 17px;
}
.f-op .mn, .f-op .pl { width: 15px; }
.layer-bar {
  width: 3px;
  height: 25px;
  margin-left: 14px;
  background: #3a6fd8;
}
.layer-name { margin-left: 6px; width: 84px; flex: none; color: #8a8a8a; }
.st-ic { width: 18px; height: 18px; margin-left: 15px; flex: none; }
.st-ic.lk { width: 14px; height: 18px; margin-left: 20px; }
.st-msg {
  margin: 2px 0 0 38px;
  width: 1015px;
  flex: none;
  font-size: 18.400px;
  line-height: 25px;
  white-space: nowrap;
  color: #8a8a8a;
}
.coords {
  margin: 2px 0 0 19px;
  width: 94px;
  flex: none;
  display: grid;
  grid-template-columns: 30px 1fr;
  font-size: 17px;
  line-height: 25px;
  color: #777;
}
.lbl-z { width: 16px; padding-right: 0; }
.lbl-r { width: 26px; }
.f-zoom { width: 111px; height: 48px; padding-left: 14px; }
.f-rot { width: 122px; height: 48px; padding-left: 19px; }

/* taskbar */
.taskbar {
  height: 59px;
  flex: none;
  display: flex;
  align-items: center;
  background: linear-gradient(to right, #d5e4ec, #d3e1ea);
  color: #000;
}
.start { width: 24px; height: 24px; margin-left: 24px; flex: none; }
.search {
  width: 430px;
  height: 56px;
  margin: 3px 0 0 25px;
  flex: none;
  background: #fff;
  display: flex;
  align-items: center;
  border: 1px solid #c9d6de;
  border-bottom: 0;
  padding-left: 17px;
  font-family: "Open Sans", sans-serif;
  font-size: 21px;
  gap: 16px;
}
.search svg { width: 25px; height: 28px; }
.task-view { width: 24px; margin-left: 24px; flex: none; }
.task-view svg { width: 24px; height: 24px; }
.apps { display: flex; margin-left: 28.500px; flex: none; align-self: stretch; }
.app {
  width: 71px;
  flex: none;
  display: flex;
  align-items: center;
  justify-content: center;
  position: relative;
  padding-bottom: 4px;
}
.app > svg { width: 36px; height: 36px; }
.app.on::after {
  content: "";
  position: absolute;
  left: 7px;
  right: 7px;
  bottom: 0;
  height: 3px;
  background: #14a8b8;
}
.active-app { background: #e6eef3; }
.active-app.on::after { left: 0; right: 0; }
.zoom-ic {
  width: 37px;
  height: 37px;
  border-radius: 17px;
  background: #1166e8;
  color: #fff;
  font-size: 10px;
  font-weight: 700;
  text-align: center;
  line-height: 37px;
}
.l-tile {
  width: 36px;
  height: 36px;
  background: #1b3fa8;
  color: #fff;
  font-family: "Liberation Sans", sans-serif;
  font-weight: 700;
  font-size: 32px;
  line-height: 36px;
  padding-left: 9px;
}
.count-badge {
  position: absolute;
  left: 40px;
  top: 29px;
  width: 24px;
  height: 24px;
  border: 1px solid #444;
  border-radius: 50%;
  background: #a3b2cc;
  text-align: center;
  line-height: 24px;
  font-size: 19px;
  font-family: "Liberation Sans", sans-serif;
}
.ink-tile {
  width: 36px;
  height: 36px;
  background: #12b0c0;
  padding: 5px;
}
.tray {
  flex: 1;
  display: flex;
  align-items: center;
  margin-left: 86.500px;
  font-family: "Open Sans", sans-serif;
}
.weather { width: 30px; height: 32px; position: relative; flex: none; }
.sun {
  width: 30px;
  height: 30px;
  margin-top: 3px;
  border-radius: 50%;
  background: radial-gradient(circle at 60% 25%, #fbb03b, #ef7a12);
}
.sun-badge {
  position: absolute;
  left: 15px;
  top: -3px;
  width: 18px;
  height: 18px;
  border-radius: 50%;
  background: #c62828;
  color: #fff;
  font-size: 13px;
  text-align: center;
  line-height: 18px;
  font-weight: 400;
}
.temp { margin-left: 15px; font-size: 20px; width: 48px; flex: none; }
.tray-up { width: 20px; height: 12px; margin-left: 34px; flex: none; }
.lang { margin-left: 17px; font-size: 17.500px; flex: none; }
.clock {
  width: 100px;
  margin-left: 16px;
  flex: none;
  display: flex;
  flex-direction: column;
  align-items: center;
  font-size: 17.500px;
  line-height: 28px;
}
.notif { margin-left: 26px; width: 24px; position: relative; flex: none; }
.notif svg { width: 24px; height: 24px; }
.count-badge.big { left: 11px; top: 9px; }
.show-desk {
  width: 1px;
  height: 100%;
  margin-left: auto;
  margin-right: 6px;
  align-self: stretch;
  background: #b9c6ce;
}
```

FILE: app.js

```js
// Inkscape default palette, in the order of the swatch strip
var colors = [
  '000000','1a1a1a','333333','4d4d4d','666666','808080','999999','b3b3b3','cccccc','e6e6e6','ececec','f2f2f2','f9f9f9','ffffff',
  '800000','ff0000','808000','ffff00','008000','00ff00','008080','00ffff','000080','0000ff','800080','ff00ff',
  '2b0000','550000','800000','aa0000','d40000','ff0000','ff2a2a','ff5555','ff8080','ffaaaa','ffd5d5',
  '280b0b','501616','782121','a02c2c','c83737','d35f5f','de8787','e9afaf','f4d7d7',
  '241c1c','483737','6c5353','916f6f','ac9393','c8b7b7','e3dbdb',
  '2b1100','552200','803300','aa4400','d45500','ff6600','ff7f2a','ff9955','ffb380','ffccaa','ffe6d5',
  '28170b','502d16','784421','a05a2c','c87137','d38d5f','deaa87','e9c6af','f4e3d7',
  '241f1c','483e37','6c5d53','917c6f','ac9d93','c8beb7','e3dedb',
  '2b2200','554400','806600','aa8800','d4aa00','ffcc00','ffd42a','ffdd55','ffe680','ffeeaa','fff6d5',
  '28220b','504416','786721','a0892c','c8ab37','d3bc5f','decd87','e9ddaf','f4eed7',
  '24221c','484537','6c6753','918a6f','aca793','c8c4b7'
];

var strip = document.getElementById('swatches');
colors.forEach(function (c) {
  var s = document.createElement('i');
  s.style.background = '#' + c;
  strip.appendChild(s);
});
```
